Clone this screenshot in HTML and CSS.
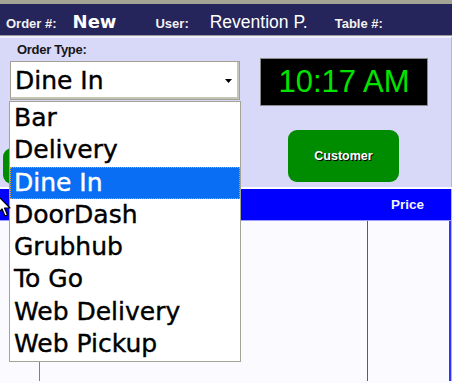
FILE: index.html
```html
<!doctype html>
<html lang="en">
<head>
    <meta charset="utf-8">
    <title>Order Entry</title>
    <link rel="stylesheet" href="styles.css">
</head>
<body>

<div class="topbar">
    <span class="topbar-label">Order #:</span>
    <span class="topbar-order">New</span>
    <span class="topbar-label topbar-user">User:</span>
    <span class="topbar-name">Revention P.</span>
    <span class="topbar-label topbar-table">Table #:</span>
</div>

<div class="panel">
    <div class="panel-top">
        <div class="order-type">
            <div class="order-type-label">Order Type:</div>
            <div class="select">
                <span class="select-value">Dine In</span>
                <svg class="select-arrow" width="7" height="4" viewBox="0 0 7 4"><path d="M0 0H7L3.5 4Z" fill="#000"/></svg>
            </div>
        </div>
        <div class="clock">10:17 AM</div>
    </div>
    <div class="panel-buttons">
        <button class="btn btn-left"></button>
        <button class="btn btn-customer">Customer</button>
    </div>
</div>

<div class="strip"></div>

<div class="grid-head">
    <div class="grid-head-cell"></div>
    <div class="grid-head-cell grid-head-price">Price</div>
</div>
<div class="grid-body">
    <div class="grid-cell grid-cell-qty"></div>
    <div class="grid-cell grid-cell-item"></div>
    <div class="grid-cell grid-cell-price"></div>
</div>

<ul class="dropdown">
    <li class="dropdown-item">Bar</li>
    <li class="dropdown-item">Delivery</li>
    <li class="dropdown-item dropdown-item_selected">Dine In</li>
    <li class="dropdown-item">DoorDash</li>
    <li class="dropdown-item">Grubhub</li>
    <li class="dropdown-item">To Go</li>
    <li class="dropdown-item">Web Delivery</li>
    <li class="dropdown-item">Web Pickup</li>
</ul>

<svg class="cursor" width="14" height="24" viewBox="0 0 14 24">
    <path d="M1 1V18L5 14L8 21L10.5 20L7.5 13H13Z" fill="#fff" stroke="#000" stroke-width="1.2" stroke-linejoin="round"/>
</svg>

</body>
</html>
```

FILE: styles.css
```css
html, body {
    margin: 0;
    padding: 0;
}

body {
    width: 452px;
    height: 383px;
    overflow: hidden;
    position: relative;
    background: #fbfbff;
    font-family: "Liberation Sans", Arial, sans-serif;
}

.topbar {
    height: 36px;
    box-sizing: border-box;
    border-top: 4px solid #a4a496;
    border-bottom: 1px solid #9a9a9a;
    background: #25245b;
    color: #fff;
    display: flex;
    align-items: baseline;
    padding: 7px 0 0 6px;
}
    .topbar-label {
        font-weight: bold;
        font-size: 13px;
        color: #f2f2f2;
    }
    .topbar-order {
        margin-left: 16px;
        font-family: "DejaVu Sans", sans-serif;
        font-weight: bold;
        font-size: 18px;
    }
    .topbar-user {margin-left: 39px;}
    .topbar-name {
        margin-left: 21px;
        font-size: 17.5px;
    }
    .topbar-table {margin-left: 27px;}

.panel {
    height: 151px;
    box-sizing: border-box;
    border-top: 2px solid #eeeeff;
    border-right: 1px solid #b8b8c8;
    background: #d8d8f8;
}

.panel-top {
    display: flex;
    align-items: flex-start;
}

.order-type {
    margin-left: 10px;
    width: 230px;
    padding-top: 4px;
}
    .order-type-label {
        margin-left: 7px;
        font-weight: bold;
        font-size: 13px;
        line-height: 15px;
        letter-spacing: -0.3px;
        color: #161616;
    }

.select {
    margin-top: 4px;
    height: 39px;
    box-sizing: border-box;
    border: 1px solid #a2a294;
    box-shadow: inset -2px -2px 0 #c4c4b8;
    background: #fff;
    display: flex;
    align-items: center;
    padding-left: 4px;
}
    .select-value {
        font-family: "DejaVu Sans", sans-serif;
        font-size: 25px;
        line-height: 32px;
        -webkit-text-stroke: 0.4px #000;
    }
    .select-arrow {
        margin-left: auto;
        margin-right: 7px;
    }

.clock {
    margin: 20px 0 0 20px;
    width: 168px;
    height: 48px;
    box-sizing: border-box;
    border: 1px solid #8a8a8a;
    background: #000;
    color: #00e400;
    font-size: 31px;
    line-height: 46px;
    text-align: center;
}

.panel-buttons {
    display: flex;
    align-items: flex-start;
}

.btn {
    border: 0;
    padding: 0;
    background: #008c00;
    border-radius: 9px;
    color: #fff;
    font-family: "Liberation Sans", Arial, sans-serif;
    font-weight: bold;
    font-size: 12.5px;
    text-shadow: 1px 1px 0 #000;
}
    .btn-left {
        margin: 42px 0 0 3px;
        width: 80px;
        height: 36px;
    }
    .btn-customer {
        margin: 24px 0 0 205px;
        width: 111px;
        height: 52px;
    }

.strip {
    height: 2px;
    background: #fdfdff;
}

.grid-head {
    height: 32px;
    box-sizing: border-box;
    border-bottom: 1px solid #9c9cff;
    border-right: 1px solid #b8b8c8;
    background: #0000ff;
    display: grid;
    grid-template-columns: 368px 83px;
}
    .grid-head-price {
        padding-left: 23px;
        color: #f4f4ff;
        font-weight: bold;
        font-size: 13.5px;
        line-height: 31px;
    }

.grid-body {
    height: 160px;
    border-right: 1px solid #b8b8c8;
    display: grid;
    grid-template-columns: 40px 328px 83px;
}
    .grid-cell {border-right: 1px solid #4848ff;}
    .grid-cell-qty {border-right-color: #7070ff;}
    .grid-cell-price {border-right: 2px solid #3030ff;}

.dropdown {
    position: absolute;
    left: 9px;
    top: 101px;
    width: 232px;
    height: 261px;
    box-sizing: border-box;
    margin: 0;
    padding: 0;
    list-style: none;
    border: 1px solid #a4a496;
    background: #fff;
}
    .dropdown-item {
        height: 32.3px;
        line-height: 32.3px;
        padding-left: 4px;
        font-family: "DejaVu Sans", sans-serif;
        font-size: 25px;
        color: #000;
        -webkit-text-stroke: 0.4px #000;
    }
    .dropdown-item_selected {
        background: #0a6ef5;
        color: #fff;
        -webkit-text-stroke: 0.4px #fff;
        outline: 1px dotted #e0a040;
        outline-offset: -1px;
    }

.cursor {
    position: absolute;
    left: -3px;
    top: 195px;
}
```
